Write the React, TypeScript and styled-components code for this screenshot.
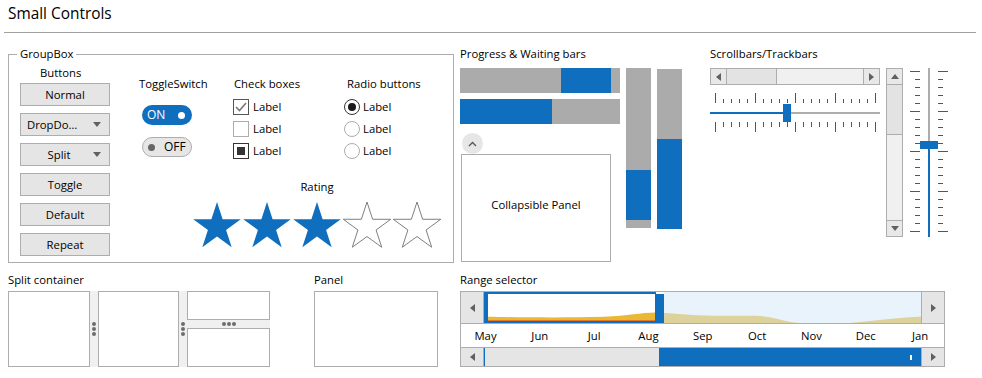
import React from 'react'
import styled, { createGlobalStyle, css } from 'styled-components'

const BLUE = '#106ebe'
const BORDER = '#adadad'
const BAR = '#ababab'
const ARROW = '#606060'

const GlobalStyle = createGlobalStyle`
  html, body {
    margin: 0;
    padding: 0;
    background: #fff;
  }
  body {
    font-family: "Open Sans", "Noto Sans", sans-serif;
    font-size: 11.3px;
    color: #000;
  }
  * {
    box-sizing: border-box;
  }
`

const Page = styled.div`
  width: 982px;
  height: 378px;
  overflow: hidden;
`

const Header = styled.div`
  margin: 0 6px 0 4px;
  padding: 4px 0 8px 4px;
  border-bottom: 1px solid #a0a0a0;
`

const Title = styled.div`
  font-size: 15.4px;
  line-height: 20px;
`

const TopRow = styled.div`
  display: flex;
  align-items: flex-start;
  margin-top: 13px;
  padding-left: 8px;
`

const BottomRow = styled.div`
  display: flex;
  align-items: flex-start;
  margin-top: 9px;
  padding-left: 8px;
`

const SectionLabel = styled.div<{ $gap?: number }>`
  line-height: 16px;
  margin-bottom: ${p => p.$gap ?? 6}px;
`

/* ---------- group box ---------- */

const GroupBox = styled.fieldset`
  margin: 0;
  width: 446px;
  min-width: 0;
  padding: 3px 11px 6px;
  border: 1px solid ${BORDER};
`

const Legend = styled.legend`
  padding: 0 3px;
  margin-left: -3px;
  line-height: 16px;
`

const GroupInner = styled.div`
  display: flex;
`

const ButtonsColumn = styled.div`
  width: 90px;
  display: flex;
  flex-direction: column;
`

const ButtonsTitle = styled.div`
  line-height: 16px;
  padding-left: 20px;
  margin-bottom: 2px;
`

const ButtonStack = styled.div`
  display: flex;
  flex-direction: column;
  gap: 7px;
`

const Button = styled.div<{ $spread?: boolean }>`
  height: 23px;
  border: 1px solid ${BORDER};
  background: #e5e5e5;
  display: flex;
  align-items: center;
  justify-content: ${p => (p.$spread ? 'space-between' : 'center')};
  padding: ${p => (p.$spread ? '0 8px 0 6px' : '0')};
  line-height: 16px;
`

const SplitText = styled.span`
  flex: 1;
  text-align: center;
  margin-left: 4px;
`

const DownArrow = styled.span<{ $mr?: number }>`
  width: 0;
  height: 0;
  border-left: 4px solid transparent;
  border-right: 4px solid transparent;
  border-top: 5px solid ${ARROW};
  margin-right: ${p => p.$mr ?? 0}px;
`

const RightArea = styled.div`
  flex: 1;
  margin-left: 29px;
  margin-top: 11px;
  display: flex;
  flex-direction: column;
`

const Columns = styled.div`
  display: flex;
`

const Column = styled.div<{ $w?: number }>`
  width: ${p => (p.$w ? `${p.$w}px` : 'auto')};
  display: flex;
  flex-direction: column;
  align-items: flex-start;
`

const ColumnTitle = styled.div<{ $indent?: number }>`
  line-height: 16px;
  padding-left: ${p => p.$indent ?? 0}px;
`

const Switch = styled.div<{ $on?: boolean; $mt: number }>`
  margin: ${p => p.$mt}px 0 0 3px;
  width: 50px;
  height: 20px;
  border-radius: 10px;
  display: flex;
  align-items: center;
  font-size: 12px;
  line-height: 16px;
  ${p =>
    p.$on
      ? css`
          background: ${BLUE};
          color: #fff;
          justify-content: space-between;
          padding: 0 7px 0 5px;
        `
      : css`
          background: #e6e6e6;
          border: 1px solid ${BORDER};
          color: #000;
          gap: 9px;
          padding: 0 0 0 5px;
        `}
`

const SwitchDot = styled.span<{ $on?: boolean }>`
  width: 7px;
  height: 7px;
  border-radius: 50%;
  background: ${p => (p.$on ? '#fff' : '#666')};
`

const ChoiceList = styled.div`
  margin-top: 4px;
  display: flex;
  flex-direction: column;
`

const Choice = styled.div<{ $gap: number }>`
  height: 22px;
  display: flex;
  align-items: center;
  gap: ${p => p.$gap}px;
  line-height: 16px;
`

type CheckState = 'checked' | 'unchecked' | 'mixed'

const CheckBox = styled.span<{ $state: CheckState }>`
  width: 16px;
  height: 16px;
  display: flex;
  align-items: center;
  justify-content: center;
  background: #fff;
  border: 1px solid ${p => (p.$state === 'unchecked' ? BORDER : p.$state === 'mixed' ? '#333' : '#555')};
`

const MixedMark = styled.span`
  width: 8px;
  height: 8px;
  background: #333;
`

const Radio = styled.span<{ $on?: boolean }>`
  width: 16px;
  height: 16px;
  border-radius: 50%;
  display: flex;
  align-items: center;
  justify-content: center;
  border: 1px solid ${p => (p.$on ? '#333' : BORDER)};
`

const RadioDot = styled.span`
  width: 8px;
  height: 8px;
  border-radius: 50%;
  background: #1a1a1a;
`

const RatingBlock = styled.div`
  align-self: flex-end;
  margin-top: 17px;
  display: flex;
  flex-direction: column;
  align-items: center;
`

const RatingLabel = styled.div`
  line-height: 16px;
`

const Stars = styled.div`
  display: flex;
  margin-top: 7px;
`

const STAR =
  '25,0 30.61,17.27 48.78,17.27 34.08,27.95 39.69,45.23 25,34.55 10.31,45.23 15.92,27.95 1.22,17.27 19.39,17.27'

function Star({ filled }: { filled: boolean }) {
  return (
    <svg width="50" height="46" viewBox="0 0 50 46">
      <polygon
        points={STAR}
        fill={filled ? BLUE : '#fff'}
        stroke={filled ? 'none' : '#7f7f7f'}
        strokeWidth="1"
      />
    </svg>
  )
}

function Check({ state, label }: { state: CheckState; label: string }) {
  return (
    <Choice $gap={4}>
      <CheckBox $state={state}>
        {state === 'checked' && (
          <svg width="14" height="14" viewBox="0 0 14 14">
            <polyline points="2,7 5.5,10.5 12,3" fill="none" stroke="#777" strokeWidth="1.6" />
          </svg>
        )}
        {state === 'mixed' && <MixedMark />}
      </CheckBox>
      {label}
    </Choice>
  )
}

/* ---------- progress ---------- */

const ProgressSection = styled.div`
  margin-left: 6px;
`

const ProgressBody = styled.div`
  display: flex;
  align-items: flex-start;
  gap: 6px;
`

const ProgressLeft = styled.div`
  width: 160px;
  display: flex;
  flex-direction: column;
  align-items: flex-start;
`

const HBar = styled.div<{ $mt?: number }>`
  width: 160px;
  height: 25px;
  margin-top: ${p => p.$mt ?? 0}px;
  background: ${BAR};
  display: flex;
`

const HFill = styled.div<{ $offset: number; $size: number }>`
  margin-left: ${p => p.$offset}px;
  width: ${p => p.$size}px;
  background: ${BLUE};
`

const VBar = styled.div<{ $mt?: number }>`
  width: 25px;
  height: 160px;
  margin-top: ${p => p.$mt ?? 0}px;
  background: ${BAR};
  display: flex;
  flex-direction: column;
`

const VFill = styled.div<{ $offset: number; $size: number }>`
  margin-top: ${p => p.$offset}px;
  height: ${p => p.$size}px;
  background: ${BLUE};
`

const CollapseButton = styled.div`
  width: 21px;
  height: 21px;
  margin: 9px 0 0 2px;
  border-radius: 50%;
  background: #e6e6e6;
  display: flex;
  align-items: center;
  justify-content: center;
`

const CollapsiblePanel = styled.div`
  width: 150px;
  height: 108px;
  margin-left: 1px;
  padding-bottom: 6px;
  border: 1px solid ${BORDER};
  display: flex;
  align-items: center;
  justify-content: center;
  line-height: 16px;
`

/* ---------- scrollbars / trackbars ---------- */

const ScrollSection = styled.div`
  margin-left: 28px;
`

const ScrollBody = styled.div`
  display: flex;
  align-items: flex-start;
`

const HColumn = styled.div`
  width: 170px;
  display: flex;
  flex-direction: column;
`

type Dir = 'left' | 'right' | 'up' | 'down'

const Arrow = styled.span<{ $dir: Dir }>`
  width: 0;
  height: 0;
  ${p =>
    p.$dir === 'left' || p.$dir === 'right'
      ? css`
          border-top: 4px solid transparent;
          border-bottom: 4px solid transparent;
          ${p.$dir === 'left' ? 'border-right' : 'border-left'}: 5px solid ${ARROW};
        `
      : css`
          border-left: 4px solid transparent;
          border-right: 4px solid transparent;
          ${p.$dir === 'up' ? 'border-bottom' : 'border-top'}: 5px solid ${ARROW};
        `}
`

const HScroll = styled.div`
  height: 17px;
  border: 1px solid ${BORDER};
  background: #f0f0f0;
  display: flex;
`

const VScroll = styled.div`
  width: 17px;
  height: 169px;
  margin-left: 6px;
  border: 1px solid ${BORDER};
  background: #f0f0f0;
  display: flex;
  flex-direction: column;
`

const ScrollButton = styled.div<{ $edge: 'left' | 'right' | 'top' | 'bottom' }>`
  flex: 0 0 16px;
  background: #e8e8e8;
  display: flex;
  align-items: center;
  justify-content: center;
  border-${p => (p.$edge === 'left' ? 'right' : p.$edge === 'right' ? 'left' : p.$edge === 'top' ? 'bottom' : 'top')}: 1px solid ${BORDER};
  margin-${p => (p.$edge === 'right' ? 'left' : p.$edge === 'bottom' ? 'top' : 'right')}: ${p =>
    p.$edge === 'right' || p.$edge === 'bottom' ? 'auto' : '0'};
`

const HScrollThumb = styled.div`
  width: 50px;
  background: #e3e3e3;
  border-right: 1px solid ${BORDER};
`

const VScrollThumb = styled.div`
  height: 50px;
  background: #e3e3e3;
  border-bottom: 1px solid ${BORDER};
`

const HTrack = styled.div`
  margin-top: 8px;
  display: flex;
  flex-direction: column;
`

const HRail = styled.div`
  height: 18px;
  display: flex;
  align-items: center;
`

const RailSeg = styled.div<{ $color: string; $len?: number; $vertical?: boolean }>`
  background: ${p => p.$color};
  ${p =>
    p.$vertical
      ? css`
          width: 2px;
          ${p.$len ? `height: ${p.$len}px;` : 'flex: 1;'}
        `
      : css`
          height: 2px;
          ${p.$len ? `width: ${p.$len}px;` : 'flex: 1;'}
        `}
`

const TrackThumb = styled.div<{ $vertical?: boolean }>`
  width: ${p => (p.$vertical ? 18 : 8)}px;
  height: ${p => (p.$vertical ? 8 : 18)}px;
  background: ${BLUE};
`

const VTrack = styled.div`
  margin-left: 7px;
  width: 38px;
  height: 169px;
  display: flex;
`

const VRail = styled.div`
  width: 18px;
  display: flex;
  flex-direction: column;
  align-items: center;
`

const TICKS = Array.from({ length: 21 }, (_, i) => i)

function HTicks({ below }: { below?: boolean }) {
  return (
    <svg width="170" height={below ? 10 : 11} style={{ display: 'block' }}>
      {TICKS.map(i => {
        const x = 5.5 + i * 8
        const major = i % 5 === 0
        const y1 = below ? 0 : major ? 0 : 6
        const y2 = below ? (major ? 10 : 5) : 10
        return <line key={i} x1={x} x2={x} y1={y1} y2={y2} stroke="#555" strokeWidth="1" />
      })}
    </svg>
  )
}

function VTicks({ right }: { right?: boolean }) {
  return (
    <svg width="10" height="169" style={{ display: 'block' }}>
      {TICKS.map(i => {
        const y = 3.5 + i * 8
        const major = i % 5 === 0
        const x1 = right ? 0 : major ? 0 : 5
        const x2 = right ? (major ? 10 : 5) : 10
        return <line key={i} x1={x1} x2={x2} y1={y} y2={y} stroke="#555" strokeWidth="1" />
      })}
    </svg>
  )
}

/* ---------- split container / panel ---------- */

const SplitBox = styled.div`
  width: 262px;
  height: 76px;
  display: flex;
`

const Pane = styled.div<{ $w?: number; $h?: number }>`
  border: 1px solid ${BORDER};
  ${p => (p.$w ? `width: ${p.$w}px;` : '')}
  ${p => (p.$h ? `height: ${p.$h}px;` : 'flex: 1;')}
`

const Splitter = styled.div<{ $horizontal?: boolean }>`
  background: #f0f0f0;
  display: flex;
  flex-direction: ${p => (p.$horizontal ? 'row' : 'column')};
  align-items: center;
  justify-content: center;
  gap: 1px;
  ${p => (p.$horizontal ? 'height: 8px;' : 'width: 8px;')}
`

const Dot = styled.span`
  width: 4px;
  height: 4px;
  border-radius: 50%;
  background: #6d6d6d;
`

const SplitStack = styled.div`
  width: 83px;
  display: flex;
  flex-direction: column;
`

const PanelSection = styled.div`
  margin-left: 44px;
`

const PlainPanel = styled.div`
  width: 124px;
  height: 76px;
  border: 1px solid ${BORDER};
`

/* ---------- range selector ---------- */

const RangeSection = styled.div`
  margin-left: 22px;
`

const RangeBox = styled.div`
  width: 485px;
  height: 76px;
  border: 1px solid ${BORDER};
  display: flex;
  flex-direction: column;
`

const ChartRow = styled.div`
  height: 32px;
  border-bottom: 1px solid ${BORDER};
  display: flex;
`

const RangeArrow = styled.div<{ $side: 'left' | 'right' }>`
  width: 23px;
  background: #e5e5e5;
  display: flex;
  align-items: center;
  justify-content: center;
  border-${p => (p.$side === 'left' ? 'right' : 'left')}: 1px solid ${BORDER};
`

const ChartArea = styled.div`
  flex: 1;
  display: flex;
`

const MonthRow = styled.div`
  height: 24px;
  border-bottom: 1px solid ${BORDER};
  display: flex;
  justify-content: space-between;
  padding-left: 0.5px;
`

const Month = styled.span`
  width: 48px;
  text-align: center;
  line-height: 23px;
`

const RangeScroll = styled.div`
  flex: 1;
  display: flex;
`

const RangeTrack = styled.div`
  flex: 1;
  background: #e5e5e5;
  display: flex;
`

const RangeStart = styled.div`
  width: 1px;
  background: ${BLUE};
`

const RangeGap = styled.div`
  width: 174px;
`

const RangeThumb = styled.div`
  flex: 1;
  background: ${BLUE};
  display: flex;
  justify-content: flex-end;
  align-items: center;
  padding-right: 9px;
`

const ThumbGrip = styled.span`
  width: 2px;
  height: 5px;
  background: #fff;
`

const AREA =
  'M0 24.7 C30 25.3 80 26 120 24.8 C145 24 158 20.5 172 20.6 C190 21 205 23.6 230 23.8 L272 23.8 C292 24.4 302 31 318 31 L366 31 C392 28 420 25.5 437 24.4 L437 31 L0 31 Z'

function RangeChart() {
  return (
    <svg width="437" height="31" viewBox="0 0 437 31" style={{ display: 'block' }}>
      <defs>
        <clipPath id="range-sel">
          <rect x="4" y="2" width="167" height="27" />
        </clipPath>
      </defs>
      <rect width="437" height="31" fill="#e9f3fc" />
      <path d={AREA} fill="#ddd29b" />
      <rect x="0" y="0" width="180" height="31" fill="#fff" />
      <g clipPath="url(#range-sel)">
        <path d={AREA} fill="#e9b936" />
        <line x1="0" x2="180" y1="28.5" y2="28.5" stroke="#e27a2a" strokeWidth="1" />
      </g>
      <rect x="0" y="0" width="172" height="2" fill={BLUE} />
      <rect x="0" y="29" width="172" height="2" fill={BLUE} />
      <rect x="0" y="0" width="4" height="31" fill={BLUE} />
      <rect x="171" y="2" width="9" height="29" fill={BLUE} />
    </svg>
  )
}

const MONTHS = ['May', 'Jun', 'Jul', 'Aug', 'Sep', 'Oct', 'Nov', 'Dec', 'Jan']

export default function App() {
  return (
    <Page>
      <GlobalStyle />
      <Header>
        <Title>Small Controls</Title>
      </Header>

      <TopRow>
        <GroupBox>
          <Legend>GroupBox</Legend>
          <GroupInner>
            <ButtonsColumn>
              <ButtonsTitle>Buttons</ButtonsTitle>
              <ButtonStack>
                <Button>Normal</Button>
                <Button $spread>
                  <span>DropDo…</span>
                  <DownArrow />
                </Button>
                <Button>
                  <SplitText>Split</SplitText>
                  <DownArrow $mr={8} />
                </Button>
                <Button>Toggle</Button>
                <Button>Default</Button>
                <Button>Repeat</Button>
              </ButtonStack>
            </ButtonsColumn>

            <RightArea>
              <Columns>
                <Column $w={94}>
                  <ColumnTitle>ToggleSwitch</ColumnTitle>
                  <Switch $on $mt={13}>
                    ON
                    <SwitchDot $on />
                  </Switch>
                  <Switch $mt={12}>
                    <SwitchDot />
                    OFF
                  </Switch>
                </Column>
                <Column $w={111}>
                  <ColumnTitle $indent={1}>Check boxes</ColumnTitle>
                  <ChoiceList>
                    <Check state="checked" label="Label" />
                    <Check state="unchecked" label="Label" />
                    <Check state="mixed" label="Label" />
                  </ChoiceList>
                </Column>
                <Column>
                  <ColumnTitle $indent={3}>Radio buttons</ColumnTitle>
                  <ChoiceList>
                    <Choice $gap={3}>
                      <Radio $on>
                        <RadioDot />
                      </Radio>
                      Label
                    </Choice>
                    <Choice $gap={3}>
                      <Radio />
                      Label
                    </Choice>
                    <Choice $gap={3}>
                      <Radio />
                      Label
                    </Choice>
                  </ChoiceList>
                </Column>
              </Columns>

              <RatingBlock>
                <RatingLabel>Rating</RatingLabel>
                <Stars>
                  {[0, 1, 2, 3, 4].map(i => (
                    <Star key={i} filled={i < 3} />
                  ))}
                </Stars>
              </RatingBlock>
            </RightArea>
          </GroupInner>
        </GroupBox>

        <ProgressSection>
          <SectionLabel>Progress &amp; Waiting bars</SectionLabel>
          <ProgressBody>
            <ProgressLeft>
              <HBar>
                <HFill $offset={101} $size={50} />
              </HBar>
              <HBar $mt={6}>
                <HFill $offset={0} $size={92} />
              </HBar>
              <CollapseButton>
                <svg width="9" height="6" viewBox="0 0 9 6">
                  <polyline points="1,5 4.5,1.5 8,5" fill="none" stroke="#555" strokeWidth="1.3" />
                </svg>
              </CollapseButton>
              <CollapsiblePanel>Collapsible Panel</CollapsiblePanel>
            </ProgressLeft>
            <VBar>
              <VFill $offset={102} $size={50} />
            </VBar>
            <VBar $mt={1}>
              <VFill $offset={70} $size={90} />
            </VBar>
          </ProgressBody>
        </ProgressSection>

        <ScrollSection>
          <SectionLabel>Scrollbars/Trackbars</SectionLabel>
          <ScrollBody>
            <HColumn>
              <HScroll>
                <ScrollButton $edge="left">
                  <Arrow $dir="left" />
                </ScrollButton>
                <HScrollThumb />
                <ScrollButton $edge="right">
                  <Arrow $dir="right" />
                </ScrollButton>
              </HScroll>
              <HTrack>
                <HTicks />
                <HRail>
                  <RailSeg $color={BLUE} $len={73} />
                  <TrackThumb />
                  <RailSeg $color={BORDER} />
                </HRail>
                <HTicks below />
              </HTrack>
            </HColumn>

            <VScroll>
              <ScrollButton $edge="top">
                <Arrow $dir="up" />
              </ScrollButton>
              <VScrollThumb />
              <ScrollButton $edge="bottom">
                <Arrow $dir="down" />
              </ScrollButton>
            </VScroll>

            <VTrack>
              <VTicks />
              <VRail>
                <RailSeg $vertical $color={BORDER} $len={73} />
                <TrackThumb $vertical />
                <RailSeg $vertical $color={BLUE} />
              </VRail>
              <VTicks right />
            </VTrack>
          </ScrollBody>
        </ScrollSection>
      </TopRow>

      <BottomRow>
        <div>
          <SectionLabel $gap={3}>Split container</SectionLabel>
          <SplitBox>
            <Pane $w={81} />
            <Splitter>
              <Dot />
              <Dot />
              <Dot />
            </Splitter>
            <Pane $w={82} />
            <Splitter>
              <Dot />
              <Dot />
              <Dot />
            </Splitter>
            <SplitStack>
              <Pane $h={29} />
              <Splitter $horizontal>
                <Dot />
                <Dot />
                <Dot />
              </Splitter>
              <Pane />
            </SplitStack>
          </SplitBox>
        </div>

        <PanelSection>
          <SectionLabel $gap={3}>Panel</SectionLabel>
          <PlainPanel />
        </PanelSection>

        <RangeSection>
          <SectionLabel $gap={3}>Range selector</SectionLabel>
          <RangeBox>
            <ChartRow>
              <RangeArrow $side="left">
                <Arrow $dir="left" />
              </RangeArrow>
              <ChartArea>
                <RangeChart />
              </ChartArea>
              <RangeArrow $side="right">
                <Arrow $dir="right" />
              </RangeArrow>
            </ChartRow>
            <MonthRow>
              {MONTHS.map(m => (
                <Month key={m}>{m}</Month>
              ))}
            </MonthRow>
            <RangeScroll>
              <RangeArrow $side="left">
                <Arrow $dir="left" />
              </RangeArrow>
              <RangeTrack>
                <RangeStart />
                <RangeGap />
                <RangeThumb>
                  <ThumbGrip />
                </RangeThumb>
              </RangeTrack>
              <RangeArrow $side="right">
                <Arrow $dir="right" />
              </RangeArrow>
            </RangeScroll>
          </RangeBox>
        </RangeSection>
      </BottomRow>
    </Page>
  )
}
